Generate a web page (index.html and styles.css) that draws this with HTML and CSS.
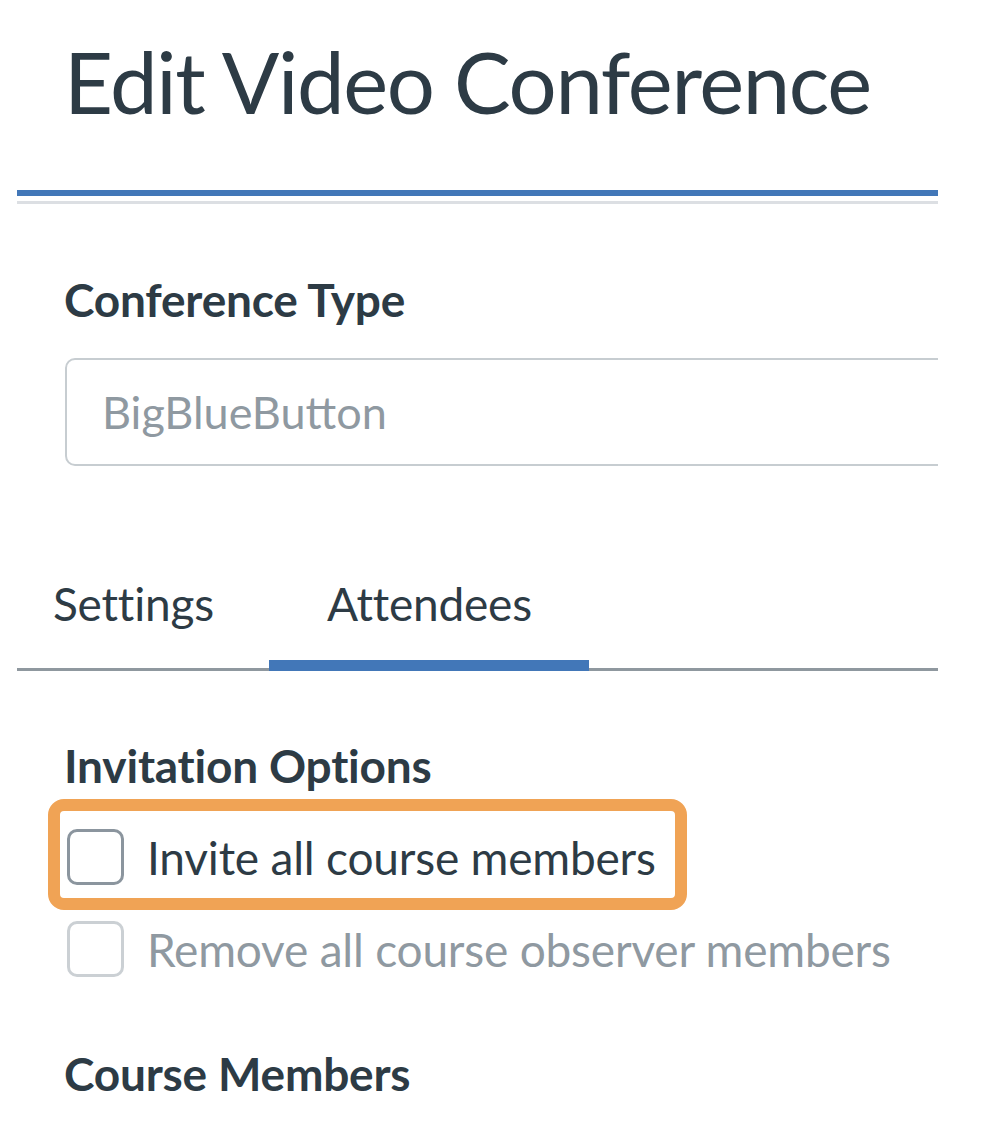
FILE: index.html
```html
<!DOCTYPE html>
<html lang="en">
<head>
<meta charset="utf-8">
<title>Edit Video Conference</title>
<link rel="stylesheet" href="styles.css">
</head>
<body>
<div class="page">
  <h1 class="title">Edit Video Conference</h1>
  <div class="title-rule"></div>

  <h2 class="section-label label-type">Conference Type</h2>
  <div class="select-box"><span class="select-value">BigBlueButton</span></div>

  <div class="tabs">
    <div class="tab tab-first">Settings</div>
    <div class="tab tab-active">Attendees</div>
  </div>

  <h2 class="section-label label-invite">Invitation Options</h2>
  <div class="options">
    <div class="highlight">
      <label class="option">
        <span class="checkbox"></span>
        <span class="option-text">Invite all course members</span>
      </label>
    </div>
    <label class="option option-disabled">
      <span class="checkbox checkbox-disabled"></span>
      <span class="option-text">Remove all course observer members</span>
    </label>
  </div>

  <h2 class="section-label label-members">Course Members</h2>
</div>
</body>
</html>
```

FILE: styles.css
```css
* { box-sizing: border-box; }
html, body { margin: 0; padding: 0; background: #ffffff; }
body {
  font-family: Lato, "Noto Sans", "Liberation Sans", sans-serif;
  color: #2d3b45;
  width: 982px;
  height: 1148px;
  overflow: hidden;
}
.page {
  margin-left: 17px;
  width: 921px;
  padding-top: 30px;
  overflow: hidden;
}
.title {
  margin: 0 0 0 47px;
  font-size: 85px;
  font-weight: 400;
  line-height: 102px;
  letter-spacing: -1.35px;
  color: #2d3b45;
}
.title-rule {
  margin-top: 58px;
  height: 14px;
  border-top: 6px solid #4277b8;
  border-bottom: 3px solid #dcdfe3;
}
.section-label {
  margin: 0 0 0 47px;
  font-size: 46px;
  font-weight: 700;
  line-height: 55px;
  letter-spacing: -0.2px;
  color: #2d3b45;
}
.label-type { margin-top: 68px; }
.label-invite { margin-top: 67px; }
.label-members { margin-top: 69px; }
.select-box {
  margin: 31px 0 0 48px;
  width: 1000px;
  height: 108px;
  border: 2px solid #c7cdd1;
  border-radius: 10px;
  display: flex;
  align-items: center;
  padding-left: 35px;
}
.select-value {
  font-size: 45px;
  line-height: 54px;
  color: #8f99a1;
}
.tabs {
  margin-top: 110px;
  display: flex;
  border-bottom: 3px solid #8f989f;
}
.tab {
  font-size: 46px;
  line-height: 55px;
  letter-spacing: -0.2px;
  padding: 0 57px 29px 58px;
  border-bottom: 11px solid transparent;
  margin-bottom: -3px;
  color: #2d3b45;
}
.tab-first { padding-left: 36px; padding-right: 55px; }
.tab-active { border-bottom-color: #4277b8; }
.options {
  margin: 6px 0 0 50px;
  display: flex;
  flex-direction: column;
  align-items: flex-start;
}
.highlight {
  margin-left: -19px;
  border: 12px solid #f0a355;
  border-radius: 16px;
  padding: 18px 19px 13px 7px;
}
.option {
  display: flex;
  align-items: center;
  gap: 23px;
}
.option-disabled { margin-top: 11px; }
.checkbox {
  width: 57px;
  height: 56px;
  border: 3px solid #8b959e;
  border-radius: 10px;
  flex: none;
  background: #fff;
}
.checkbox-disabled { border-color: #cbd0d4; }
.option-text {
  font-size: 46px;
  line-height: 55px;
  letter-spacing: -0.2px;
  color: #2d3b45;
}
.option-disabled .option-text { color: #8f99a1; }
```
